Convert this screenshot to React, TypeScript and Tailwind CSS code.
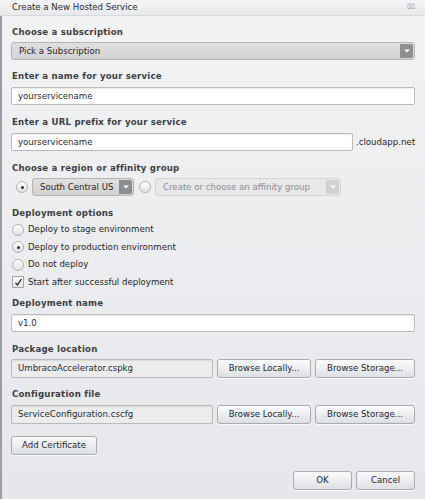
import React from 'react';

const font = { fontFamily: '"DejaVu Sans", Verdana, sans-serif' };

function Label({ children, className = '' }: { children: React.ReactNode; className?: string }) {
    return <div className={`h-[12px] leading-[12px] text-[8.6px] tracking-[0.2px] font-bold text-[#3d3f42] ${className}`}>{children}</div>;
}

function TextBox({ value, className = '', readOnly = false }: { value: string; className?: string; readOnly?: boolean }) {
    return (
        <div
            className={`h-[18px] flex items-center px-[6px] rounded-[2px] border border-[#b7bbbf] shadow-[inset_0_1px_1px_rgba(0,0,0,0.08)] text-[8.6px] text-[#2b2b2b] ${readOnly ? 'bg-[#ececec]' : 'bg-white'} ${className}`}
        >
            {value}
        </div>
    );
}

function Arrow({ light = false }: { light?: boolean }) {
    return (
        <div className={`w-[13px] self-stretch flex items-center justify-center rounded-r-[2px] ${light ? 'bg-[#cfd1d3]' : 'bg-[#8d8e90]'}`}>
            <svg width="6" height="4" viewBox="0 0 6 4">
                <path d="M0 0.5 L6 0.5 L3 3.5 Z" fill="#ffffff" />
            </svg>
        </div>
    );
}

function Select({ value, className = '', disabled = false }: { value: string; className?: string; disabled?: boolean }) {
    return (
        <div
            className={`h-[18px] flex items-stretch rounded-[3px] border p-[1px] text-[8.6px] ${disabled ? 'border-[#d2d4d6] bg-[#e7e8e9] text-[#8a8c8f]' : 'border-[#b3b5b8] bg-gradient-to-b from-[#e0e0e0] to-[#d3d3d3] text-[#262626]'} ${className}`}
        >
            <div className="flex-1 flex items-center px-[6px] whitespace-nowrap overflow-hidden">{value}</div>
            <Arrow light={disabled} />
        </div>
    );
}

function Radio({ checked = false }: { checked?: boolean }) {
    return (
        <div className="w-[12px] h-[12px] rounded-full border border-[#aeb2b7] bg-gradient-to-b from-white to-[#dfe1e3] flex items-center justify-center shrink-0">
            {checked && <div className="w-[3px] h-[3px] rounded-full bg-[#2e2e2e]" />}
        </div>
    );
}

function Checkbox() {
    return (
        <div className="w-[12px] h-[12px] border border-[#a3a7ac] bg-gradient-to-b from-white to-[#e3e5e7] flex items-center justify-center shrink-0">
            <svg width="9" height="9" viewBox="0 0 9 9">
                <path d="M1.5 4.8 L3.5 7 L7.5 1" stroke="#222" strokeWidth="1.3" fill="none" />
            </svg>
        </div>
    );
}

function Button({ children, className = '' }: { children: React.ReactNode; className?: string }) {
    return (
        <div
            className={`h-[19px] flex items-center justify-center rounded-[3px] border border-[#a8acb1] bg-gradient-to-b from-[#fbfbfc] to-[#dde0e3] shadow-[0_1px_0_rgba(255,255,255,0.8)] text-[8.6px] text-[#262626] whitespace-nowrap ${className}`}
        >
            {children}
        </div>
    );
}

function Option({ children, radio, checked = false }: { children: React.ReactNode; radio?: boolean; checked?: boolean }) {
    return (
        <div className="h-[17.5px] flex items-center gap-[4px] text-[8.6px] text-[#262626]">
            {radio ? <Radio checked={checked} /> : <Checkbox />}
            <span>{children}</span>
        </div>
    );
}

export default function App() {
    return (
        <div style={font} className="w-[425px] h-[499px] flex flex-col bg-[#e9ebed] overflow-hidden">
            {/* Title bar */}
            <div className="h-[16px] flex items-center justify-between pl-[12px] pr-[10px] bg-gradient-to-b from-[#f4f5f6] to-[#e6e8ea] border-b border-[#d6d9dc] text-[8.6px] text-[#2b2b2b]">
                <span>Create a New Hosted Service</span>
                <span className="text-[7px] text-[#a6a9ad]">⌧</span>
            </div>

            {/* Body */}
            <div className="flex-1 flex flex-col border-l-2 border-[#9a9ea3] bg-gradient-to-b from-[#f1f2f4] to-[#e5e7ea] pl-[9px] pr-[10px]">
                <Label className="mt-[10px] pl-[1px]">Choose a subscription</Label>
                <Select value="Pick a Subscription" className="mt-[4px]" />

                <Label className="mt-[10px] pl-[1px]">Enter a name for your service</Label>
                <TextBox value="yourservicename" className="mt-[5px]" />

                <Label className="mt-[11px] pl-[1px]">Enter a URL prefix for your service</Label>
                <div className="mt-[5px] flex items-center gap-[3px]">
                    <TextBox value="yourservicename" className="w-[342px]" />
                    <span className="text-[8.6px] text-[#262626]">.cloudapp.net</span>
                </div>

                <Label className="mt-[11px] pl-[1px]">Choose a region or affinity group</Label>
                <div className="mt-[4px] flex items-center">
                    <div className="pl-[5px]">
                        <Radio checked />
                    </div>
                    <Select value="South Central US" className="ml-[4px] w-[102px]" />
                    <div className="ml-[5px]">
                        <Radio />
                    </div>
                    <Select value="Create or choose an affinity group" disabled className="ml-[4px] w-[186px]" />
                </div>

                <Label className="mt-[11px] pl-[1px]">Deployment options</Label>
                <div className="mt-[2px] flex flex-col pl-[1px]">
                    <Option radio>Deploy to stage environment</Option>
                    <Option radio checked>Deploy to production environment</Option>
                    <Option radio>Do not deploy</Option>
                    <Option>Start after successful deployment</Option>
                </div>

                <Label className="mt-[6px] pl-[1px]">Deployment name</Label>
                <TextBox value="v1.0" className="mt-[5px]" />

                <Label className="mt-[11px] pl-[1px]">Package location</Label>
                <div className="mt-[4px] flex items-center gap-[4px]">
                    <TextBox value="UmbracoAccelerator.cspkg" readOnly className="w-[202px] h-[19px]" />
                    <Button className="w-[94px]">Browse Locally...</Button>
                    <Button className="flex-1">Browse Storage...</Button>
                </div>

                <Label className="mt-[10px] pl-[1px]">Configuration file</Label>
                <div className="mt-[5px] flex items-center gap-[4px]">
                    <TextBox value="ServiceConfiguration.cscfg" readOnly className="w-[202px] h-[19px]" />
                    <Button className="w-[94px]">Browse Locally...</Button>
                    <Button className="flex-1">Browse Storage...</Button>
                </div>

                <Button className="mt-[12px] w-[86px]">Add Certificate</Button>

                <div className="mt-[16px] flex justify-end gap-[4px]">
                    <Button className="w-[59px]">OK</Button>
                    <Button className="w-[59px]">Cancel</Button>
                </div>
            </div>
        </div>
    );
}
